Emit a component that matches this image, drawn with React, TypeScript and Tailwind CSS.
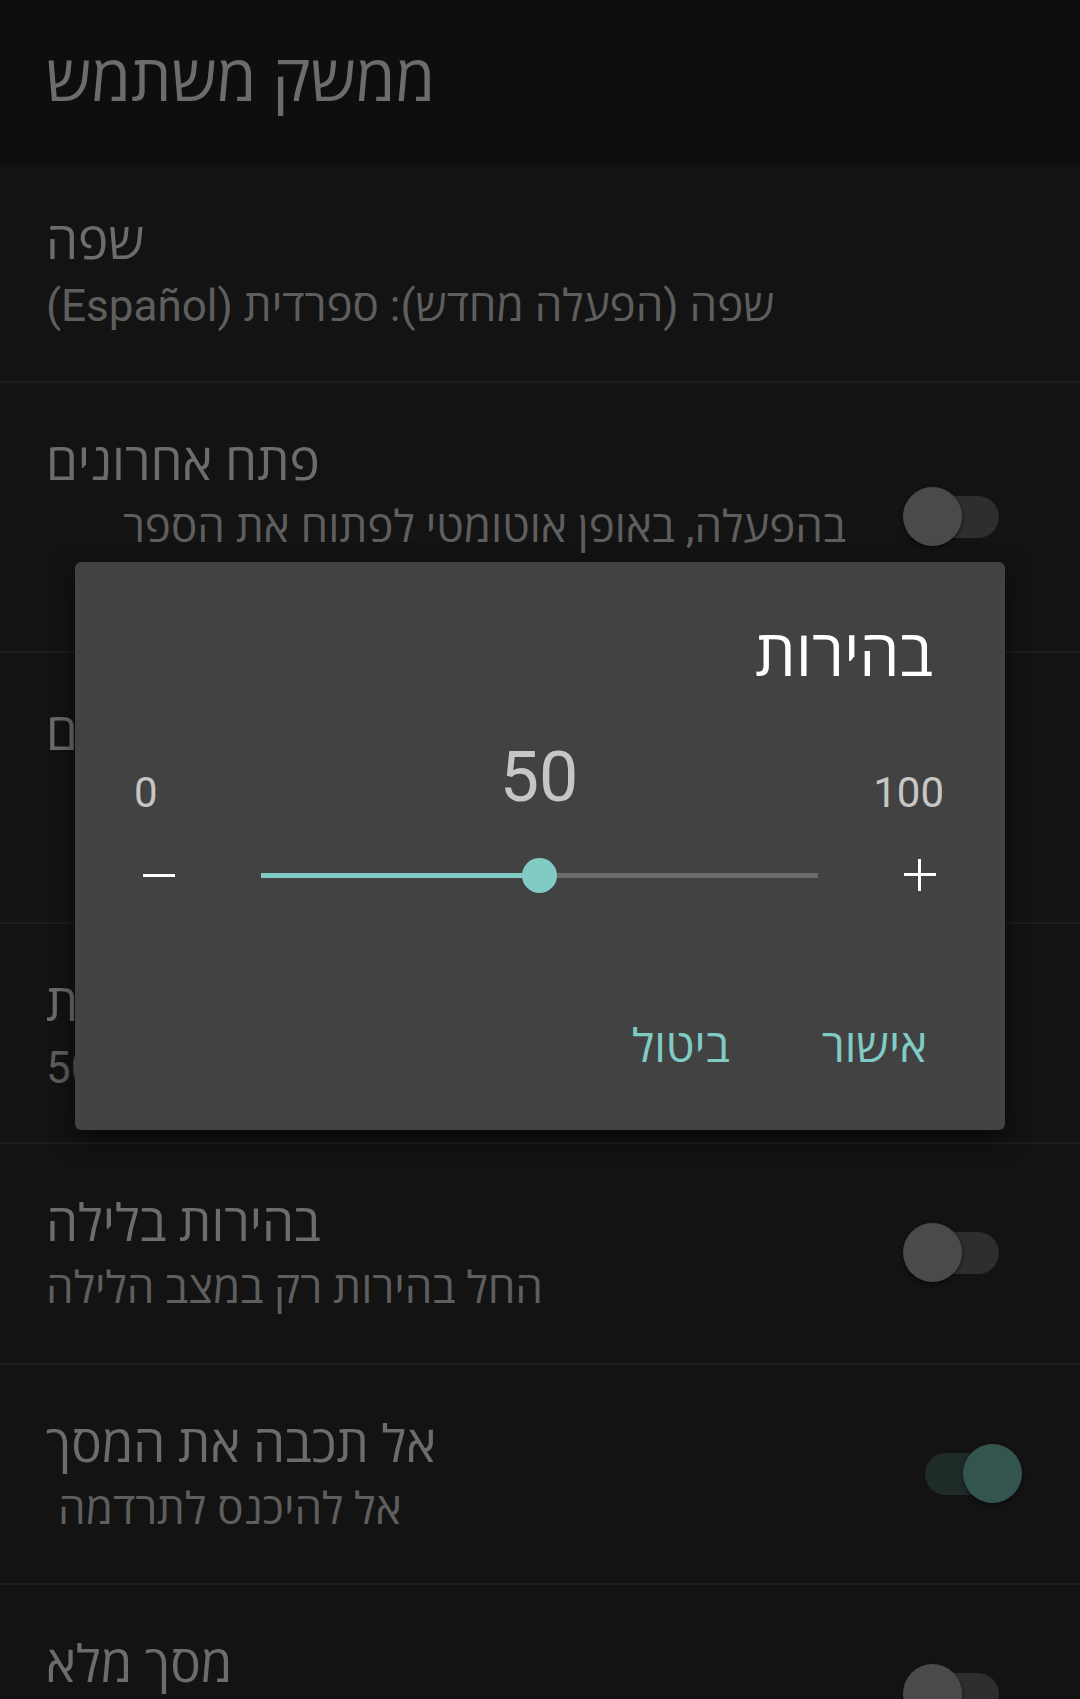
type Pref = {
  title: string
  summary: string
  toggle?: 'on' | 'off'
  indent?: boolean
}

const prefs: Pref[] = [
  { title: 'שפה', summary: 'שפה (הפעלה מחדש): ספרדית (Español)' },
  { title: 'פתח אחרונים', summary: 'בהפעלה, באופן אוטומטי לפתוח את הספר האחרון שנקרא בעת פתיחת היישום', toggle: 'off' },
  { title: 'הצג מספרי עמודים', summary: 'הצג את מספר העמוד הנוכחי ואת מספר העמודים הכולל בתחתית', toggle: 'off' },
  { title: 'בהירות', summary: '50' },
  { title: 'בהירות בלילה', summary: 'החל בהירות רק במצב הלילה', toggle: 'off' },
  { title: 'אל תכבה את המסך', summary: 'אל להיכנס לתרדמה', toggle: 'on', indent: true },
  { title: 'מסך מלא', summary: 'הסתר את שורת המצב בזמן הקריאה', toggle: 'off' },
]

function Toggle({ on }: { on: boolean }) {
  return (
    <div className="relative w-[120px] h-[60px] shrink-0">
      <div
        className={
          on
            ? 'absolute left-[24px] top-[9px] w-[74px] h-[42px] rounded-full bg-[#1f2b29]'
            : 'absolute left-[24px] top-[9px] w-[74px] h-[42px] rounded-full bg-[#2e2e2e]'
        }
      />
      <div
        className={
          on
            ? 'absolute left-[62px] top-0 w-[59px] h-[59px] rounded-full bg-[#33544f] shadow-[0_2px_4px_rgba(0,0,0,0.5)]'
            : 'absolute left-[2px] top-0 w-[59px] h-[59px] rounded-full bg-[#4a4a4a] shadow-[0_2px_4px_rgba(0,0,0,0.5)]'
        }
      />
    </div>
  )
}

function PrefRow({ pref }: { pref: Pref }) {
  return (
    <div className="flex items-center border-b-2 border-[#1d1d1d]">
      <div className="flex-1 min-w-0 flex flex-col items-start pl-[46px] pt-[50px] pb-[49.5px]">
        <div dir="rtl" className="text-[51px] leading-[60px] text-[#6c6c6c]">
          {pref.title}
        </div>
        <div
          dir="rtl"
          className={
            pref.indent
              ? 'mt-[9px] pl-[12px] text-[44px] leading-[50px] text-[#5e5e5e]'
              : 'mt-[9px] text-[44px] leading-[50px] text-[#5e5e5e]'
          }
        >
          {pref.summary}
        </div>
      </div>
      {pref.toggle && (
        <div className="w-[234px] shrink-0 pl-[55px]">
          <Toggle on={pref.toggle === 'on'} />
        </div>
      )}
    </div>
  )
}

function BrightnessDialog() {
  return (
    <div className="absolute left-[75px] top-[562px] w-[930px] h-[568px] rounded-[6px] bg-[#424242] shadow-[0_8px_24px_rgba(0,0,0,0.6)] flex flex-col">
      <div dir="rtl" className="mt-[53px] h-[80px] pr-[72px] text-[64px] leading-[80px] text-white">
        בהירות
      </div>

      <div className="h-[150px] grid grid-cols-3 items-start pl-[59px] pr-[61px] text-[#c6c6c6]">
        <div className="mt-[77px] text-[42px] leading-[42px] text-left">0</div>
        <div className="mt-[47px] text-[70px] leading-[70px] text-center">50</div>
        <div className="mt-[77px] text-[42px] leading-[42px] text-right">100</div>
      </div>

      <div className="h-[60px] flex items-center">
        <div className="ml-[68px] w-[32px] h-[3px] bg-white" />
        <div className="ml-[86px] relative w-[557px] h-[5px] bg-[#6b6b6b]">
          <div className="absolute left-0 top-0 h-[5px] w-[278px] bg-[#80cbc4]" />
          <div className="absolute left-[261px] top-[-15px] w-[35px] h-[35px] rounded-full bg-[#80cbc4]" />
        </div>
        <div className="ml-[86px] relative w-[32px] h-[32px]">
          <div className="absolute left-0 top-[14px] w-[32px] h-[3px] bg-white" />
          <div className="absolute left-[14px] top-0 w-[3px] h-[32px] bg-white" />
        </div>
      </div>

      <div className="mt-[111px] h-[60px] flex justify-end gap-[92px] pr-[78px] text-[46px] leading-[60px] text-[#80cbc4]">
        <span dir="rtl">ביטול</span>
        <span dir="rtl">אישור</span>
      </div>
    </div>
  )
}

export default function App() {
  return (
    <div className="relative w-[1080px] h-[1699px] overflow-hidden bg-[#131313] [font-family:Roboto,'Open_Sans',sans-serif]">
      <div className="h-[162px] flex items-center pl-[46px] pb-[2px] bg-[#0e0e0e] shadow-[0_2px_6px_rgba(0,0,0,0.4)]">
        <h1 dir="rtl" className="text-[64px] leading-[80px] text-[#6c6c6c]">
          ממשק משתמש
        </h1>
      </div>

      <div className="flex flex-col">
        {prefs.map((p) => (
          <PrefRow key={p.title} pref={p} />
        ))}
      </div>

      <BrightnessDialog />
    </div>
  )
}
